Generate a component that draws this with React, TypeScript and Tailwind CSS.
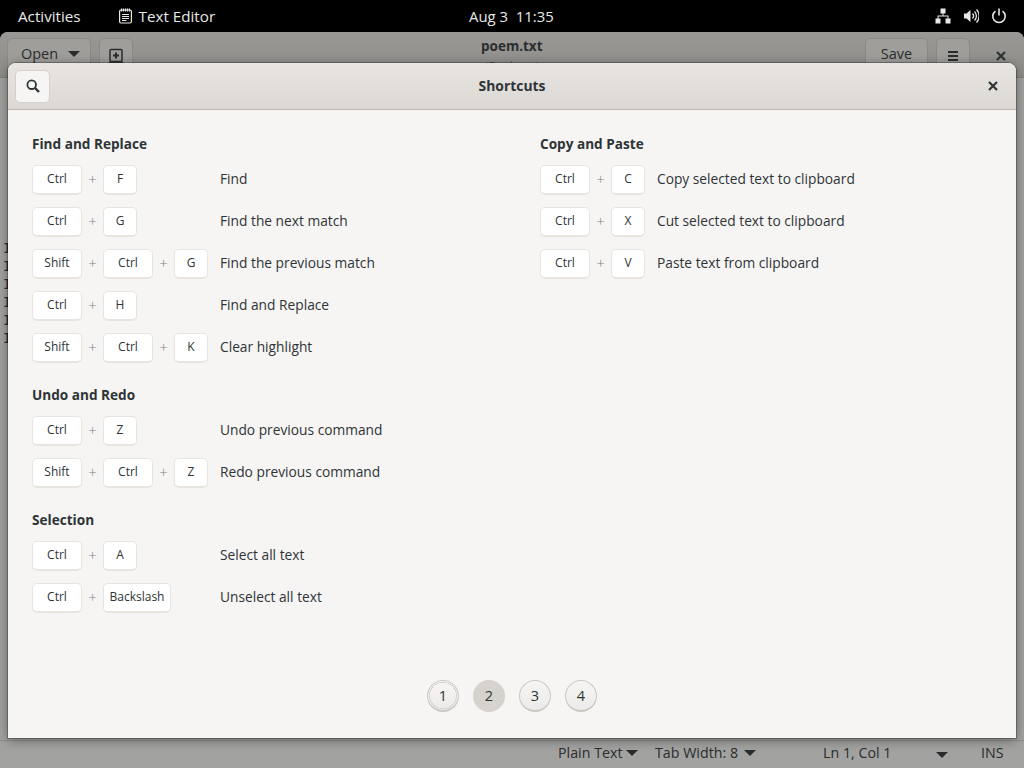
type Shortcut = { keys: string[]; label: string };
type Section = { title: string; items: Shortcut[] };

const LEFT: Section[] = [
  {
    title: "Find and Replace",
    items: [
      { keys: ["Ctrl", "F"], label: "Find" },
      { keys: ["Ctrl", "G"], label: "Find the next match" },
      { keys: ["Shift", "Ctrl", "G"], label: "Find the previous match" },
      { keys: ["Ctrl", "H"], label: "Find and Replace" },
      { keys: ["Shift", "Ctrl", "K"], label: "Clear highlight" },
    ],
  },
  {
    title: "Undo and Redo",
    items: [
      { keys: ["Ctrl", "Z"], label: "Undo previous command" },
      { keys: ["Shift", "Ctrl", "Z"], label: "Redo previous command" },
    ],
  },
  {
    title: "Selection",
    items: [
      { keys: ["Ctrl", "A"], label: "Select all text" },
      { keys: ["Ctrl", "Backslash"], label: "Unselect all text" },
    ],
  },
];

const RIGHT: Section[] = [
  {
    title: "Copy and Paste",
    items: [
      { keys: ["Ctrl", "C"], label: "Copy selected text to clipboard" },
      { keys: ["Ctrl", "X"], label: "Cut selected text to clipboard" },
      { keys: ["Ctrl", "V"], label: "Paste text from clipboard" },
    ],
  },
];

function Caret() {
  return <span className="inline-block w-0 h-0 border-x-[6px] border-x-transparent border-t-[6px] border-t-[#2a2d2e]" />;
}

function Key({ name }: { name: string }) {
  const width = name.length === 1 ? "w-[34px]" : name === "Backslash" ? "w-[68px]" : "w-[50px]";
  return (
    <span className={`${width} h-[30px] flex items-center justify-center rounded-[5px] border border-[#e8e5e1] border-b-2 bg-white pb-[2px] text-[12px] text-[#2e3436]`}>
      {name}
    </span>
  );
}

function Row({ item, keysWidth }: { item: Shortcut; keysWidth: string }) {
  return (
    <div className="flex items-center h-[30px] gap-3">
      <div className={`${keysWidth} flex items-center`}>
        {item.keys.map((k, i) => (
          <span key={i} className="flex items-center">
            {i > 0 && <span className="w-[21px] pb-[2px] text-center text-[15px] font-light text-[#7f8283]">+</span>}
            <Key name={k} />
          </span>
        ))}
      </div>
      <span className="pb-[2px] text-[13.75px] text-[#2e3436]">{item.label}</span>
    </div>
  );
}

function Column({ sections, keysWidth, width }: { sections: Section[]; keysWidth: string; width: string }) {
  return (
    <div className={`${width} flex flex-col gap-[22px]`}>
      {sections.map((s) => (
        <div key={s.title} className="flex flex-col gap-3">
          <h3 className="h-[20px] mb-[-1px] leading-[20px] text-[13.6px] font-bold text-[#2e3436]">{s.title}</h3>
          {s.items.map((it) => (
            <Row key={it.label} item={it} keysWidth={keysWidth} />
          ))}
        </div>
      ))}
    </div>
  );
}

function NetworkIcon() {
  return (
    <svg width="16" height="16" viewBox="0 0 16 16" fill="#e8e8e6">
      <rect x="5.5" y="0.5" width="5" height="5" />
      <rect x="0.5" y="10.5" width="5" height="5" />
      <rect x="10.5" y="10.5" width="5" height="5" />
      <path d="M7.5 5h1v2.5H13.5V11h-1V8.5h-9V11h-1V7.5h5z" />
    </svg>
  );
}

function VolumeIcon() {
  return (
    <svg width="16" height="16" viewBox="0 0 16 16" fill="none" stroke="#e8e8e6" strokeWidth="1.3">
      <path d="M1 5.5h2.5L7.5 2v12l-4-3.5H1z" fill="#e8e8e6" stroke="none" />
      <path d="M9.5 5.5a3.5 3.5 0 0 1 0 5" />
      <path d="M11.5 3.5a6.3 6.3 0 0 1 0 9" />
      <path d="M13.5 1.5a9.2 9.2 0 0 1 0 13" />
    </svg>
  );
}

function PowerIcon() {
  return (
    <svg width="16" height="16" viewBox="0 0 16 16" fill="none" stroke="#e8e8e6" strokeWidth="1.6">
      <path d="M4.5 3.2a6.2 6.2 0 1 0 7 0" />
      <path d="M8 0.5v7" />
    </svg>
  );
}

function NotepadIcon() {
  return (
    <svg width="13" height="16" viewBox="0 0 13 16" fill="none" stroke="#e8e8e6" strokeWidth="1.2">
      <rect x="0.6" y="2" width="11.8" height="13" rx="1.5" />
      <path d="M2.5 0.5v3M4.5 0.5v3M6.5 0.5v3M8.5 0.5v3M10.5 0.5v3" />
      <path d="M3 6.5h7M3 8.5h7M3 10.5h7M3 12.5h4.5" />
    </svg>
  );
}

function NewTabIcon() {
  return (
    <svg width="16" height="16" viewBox="0 0 16 16" fill="none" stroke="#2a2d2e" strokeWidth="1.5">
      <rect x="2" y="1.5" width="12" height="12" rx="1" />
      <path d="M8 4.5v6M5 7.5h6" strokeWidth="2" />
      <path d="M0.5 15h15" />
    </svg>
  );
}

function MenuIcon() {
  return (
    <svg width="12" height="12" viewBox="0 0 12 12" fill="#2a2d2e">
      <rect x="1" y="1" width="10" height="2" />
      <rect x="1" y="5" width="10" height="2" />
      <rect x="1" y="9" width="10" height="2" />
    </svg>
  );
}

function CloseIcon() {
  return (
    <svg width="10" height="10" viewBox="0 0 10 10" fill="none" stroke="#2e3436" strokeWidth="2.2">
      <path d="M1 1l8 8M9 1l-8 8" />
    </svg>
  );
}

function SearchIcon() {
  return (
    <svg width="14" height="14" viewBox="0 0 14 14" fill="none" stroke="#2e3436">
      <circle cx="5.7" cy="5.7" r="4.3" strokeWidth="1.8" />
      <path d="M9 9l4 4" strokeWidth="2.4" />
    </svg>
  );
}

function TopBar() {
  return (
    <div className="h-8 shrink-0 bg-black text-[#e8e8e6] text-[15.2px] font-medium flex items-center justify-between pl-[18px] pr-[17px]">
      <div className="flex items-center gap-[38px]">
        <span>Activities</span>
        <span className="flex items-center gap-[7px]">
          <NotepadIcon />
          Text Editor
        </span>
      </div>
      <span className="absolute left-[469px] text-[14.9px]">Aug 3&nbsp; 11:35</span>
      <div className="flex items-center gap-3">
        <NetworkIcon />
        <VolumeIcon />
        <PowerIcon />
      </div>
    </div>
  );
}

function EditorBehind() {
  return (
    <div className="flex-1 flex flex-col rounded-t-[8px] bg-[#a2a2a0] text-[#2a2d2e] overflow-hidden">
      <div className="h-[46px] shrink-0 bg-linear-to-b from-[#999895] to-[#8e8d8a] border-b border-[#7e7d7a] flex items-start pt-[6px] pl-[7px] justify-between relative">
        <div className="flex gap-2">
          <div className="w-[84px] h-[36px] rounded-[5px] bg-[#9f9e9b] border border-[#8a8986] flex items-center justify-center gap-[10px] pl-[3px] pb-[4px] text-[14.5px]">
            Open <Caret />
          </div>
          <div className="w-[34px] h-[36px] rounded-[5px] bg-[#9f9e9b] border border-[#8a8986] flex items-center justify-center">
            <NewTabIcon />
          </div>
        </div>
        <div className="absolute left-[481px] top-[5px] flex flex-col items-center leading-[19px]">
          <span className="text-[13.5px] font-bold">poem.txt</span>
          <span className="mt-[2px] text-[12px] leading-[17px] text-[#555]">(Desktop)</span>
        </div>
        <div className="flex items-start gap-2">
          <div className="w-[63px] h-[36px] rounded-[5px] bg-[#9f9e9b] border border-[#8a8986] flex items-center justify-center pb-[4px] text-[14.5px]">Save</div>
          <div className="w-[34px] h-[36px] rounded-[5px] bg-[#9f9e9b] border border-[#8a8986] flex items-center justify-center">
            <MenuIcon />
          </div>
          <div className="w-[46px] h-[36px] flex items-center justify-center"><CloseIcon /></div>
        </div>
      </div>
      {/* text lines of the editor, mostly hidden by the dialog */}
      <div className="flex-1 flex flex-col pl-[3px] pt-[161px] font-['DejaVu_Sans_Mono',monospace] text-[14px] leading-[18px]">
        {[0, 1, 2, 3, 4, 5].map((n) => (
          <span key={n}>I</span>
        ))}
      </div>
      <div className="h-[28px] shrink-0 border-t border-[#8f8f8d] flex items-center pl-[558px] pb-[3px] text-[14.25px]">
        <span className="flex items-center gap-[3px] w-[97px]">Plain Text <Caret /></span>
        <span className="flex items-center gap-[6px] w-[168px]">Tab Width: 8 <Caret /></span>
        <span className="w-[113px]">Ln 1, Col 1</span>
        <span className="w-[45px]"><Caret /></span>
        <span>INS</span>
      </div>
    </div>
  );
}

function Pager() {
  return (
    <div className="flex justify-center gap-[14px] pb-[26px]">
      {["1", "2", "3", "4"].map((n) => (
        <div
          key={n}
          className={
            n === "2"
              ? "w-8 h-8 rounded-full bg-[#d6d2cd] flex items-center justify-center text-[14.5px] text-[#2e3436]"
              : "relative w-8 h-8 rounded-full border border-[#cdc7c2] border-b-2 bg-linear-to-b from-[#f6f5f4] to-[#edebe9] flex items-center justify-center text-[14.5px] text-[#2e3436]"
          }
        >
          {n === "1" && <span className="absolute inset-[1px] rounded-full border border-dotted border-[#b5b1ad]" />}
          {n}
        </div>
      ))}
    </div>
  );
}

export default function App() {
  return (
    <div className="relative h-screen w-screen overflow-hidden flex flex-col bg-black font-['Open_Sans',sans-serif]">
      <TopBar />
      <EditorBehind />

      {/* Shortcuts dialog */}
      <div className="absolute left-2 top-[63px] w-[1008px] h-[675px] flex flex-col rounded-t-[8px] bg-[#f6f5f4] shadow-[0_0_0_1px_rgba(0,0,0,0.25),0_2px_12px_rgba(0,0,0,0.4)]">
        <div className="h-[47px] shrink-0 rounded-t-[8px] bg-linear-to-b from-[#e7e4e1] to-[#dcd9d5] border-b border-[#bfb8b1] flex items-center justify-between px-[7px]">
          <div className="w-[35px]">
            <div className="w-[35px] h-[33px] rounded-[5px] border border-[#d5d0cc] bg-[#f6f5f4] flex items-center justify-center">
              <SearchIcon />
            </div>
          </div>
          <span className="text-[13.9px] font-bold text-[#2e3436]">Shortcuts</span>
          <div className="w-[35px] flex justify-end pr-[11px]"><CloseIcon /></div>
        </div>
        <div className="flex-1 flex pl-6 pt-[24px]">
          <Column sections={LEFT} keysWidth="w-[176px]" width="w-[508px]" />
          <Column sections={RIGHT} keysWidth="w-[105px]" width="w-[400px]" />
        </div>
        <Pager />
      </div>
    </div>
  );
}
